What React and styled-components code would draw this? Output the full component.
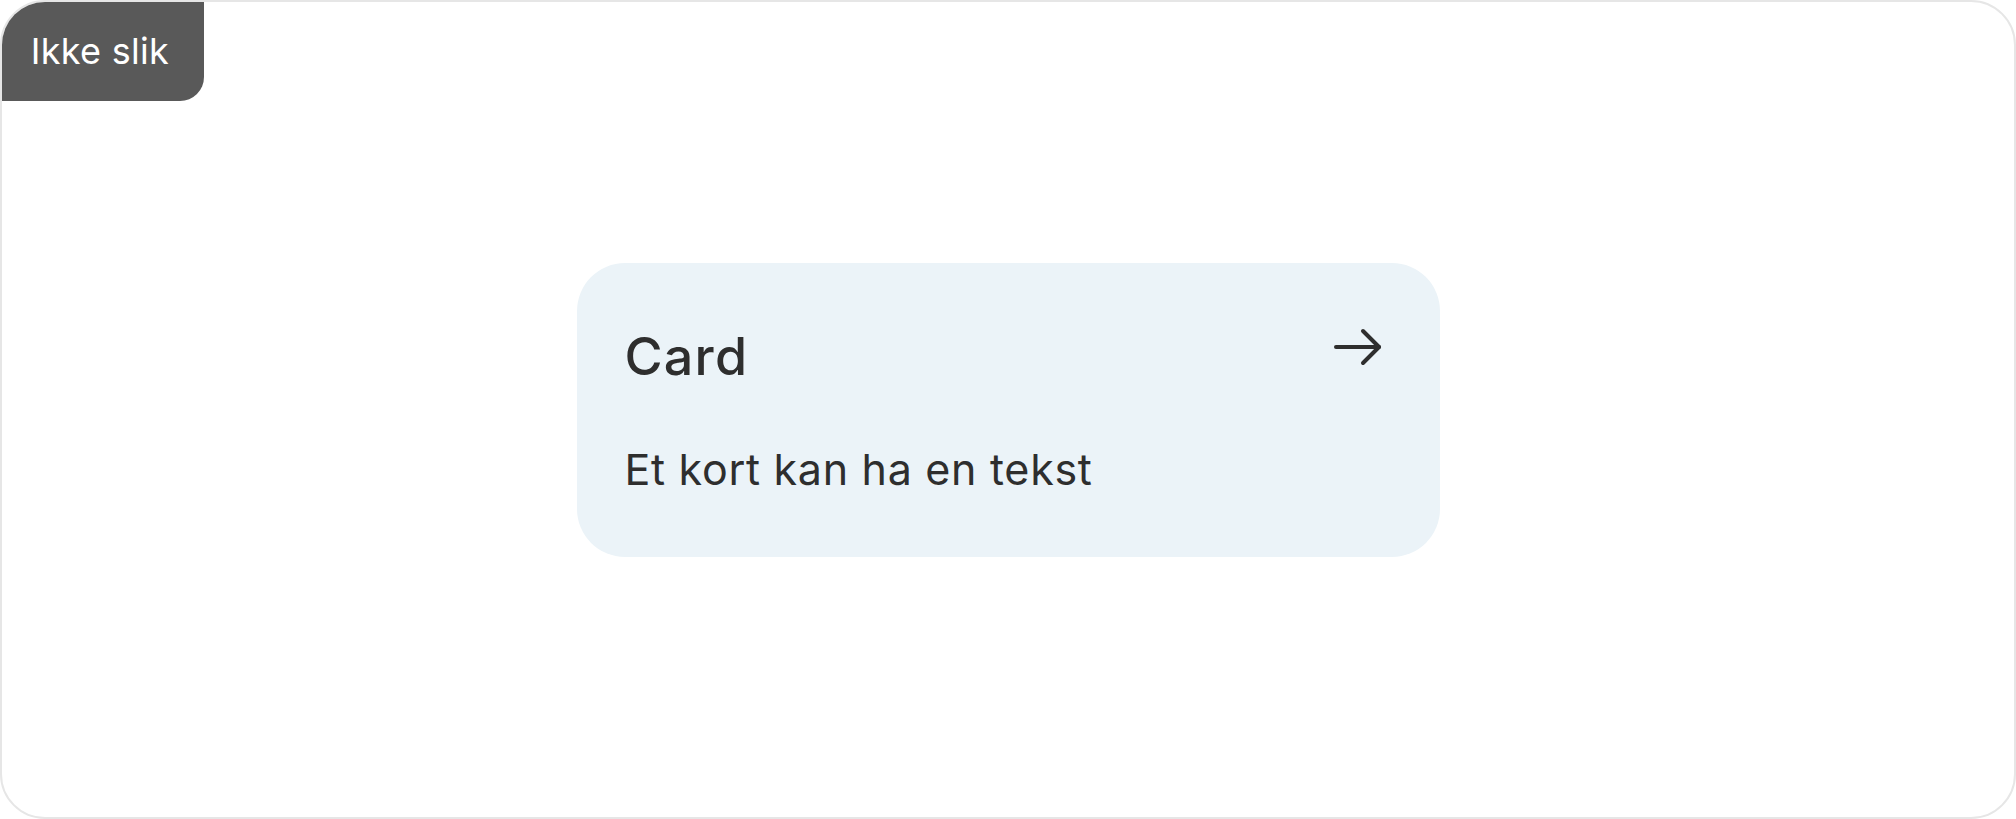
import React from 'react';
import styled, { createGlobalStyle } from 'styled-components';

const GlobalStyle = createGlobalStyle`
  * { box-sizing: border-box; }
  html, body { margin: 0; padding: 0; background: #ffffff; }
  body { font-family: Inter, "Noto Sans", "Liberation Sans", sans-serif; }
`;

const Frame = styled.div`
  position: relative;
  width: 100vw;
  height: 819px;
  border: 2px solid #e6e6e6;
  border-radius: 45px;
  display: flex;
  align-items: center;
  justify-content: center;
  overflow: hidden;
`;

const Badge = styled.div`
  position: absolute;
  top: -2px;
  left: -2px;
  width: 204px;
  height: 101px;
  background: #595959;
  color: #ffffff;
  border-radius: 46px 0 24px 0;
  display: flex;
  align-items: center;
  justify-content: center;
  font-size: 36px;
  line-height: 1;
  letter-spacing: 0.3px;
  padding-right: 4px;
`;

const Card = styled.a`
  width: 863px;
  height: 294px;
  background: #ebf3f8;
  border-radius: 48px;
  padding: 63px 57px 62px 48px;
  display: flex;
  flex-direction: column;
  gap: 56px;
  color: #2e2e2e;
  text-decoration: none;
`;

const Header = styled.div`
  display: flex;
  justify-content: space-between;
  align-items: flex-start;
`;

const Title = styled.h2`
  margin: 0;
  font-size: 52px;
  font-weight: 500;
  line-height: 1.2;
  letter-spacing: 1.2px;
`;

const Text = styled.p`
  margin: 0;
  font-size: 43px;
  font-weight: 400;
  line-height: 1.2;
  letter-spacing: 0.7px;
`;

const Arrow = () => (
  <svg width="50" height="44" viewBox="0 0 50 44" fill="none" stroke="#2e2e2e" strokeWidth="4" strokeLinecap="round" strokeLinejoin="round">
    <path d="M3 21 H46" />
    <path d="M30 5 L46 21 L30 37" />
  </svg>
);

export default function App() {
  return (
    <>
      <GlobalStyle />
      <Frame>
        <Badge>Ikke slik</Badge>
        <Card href="#">
          <Header>
            <Title>Card</Title>
            <Arrow />
          </Header>
          <Text>Et kort kan ha en tekst</Text>
        </Card>
      </Frame>
    </>
  );
}
